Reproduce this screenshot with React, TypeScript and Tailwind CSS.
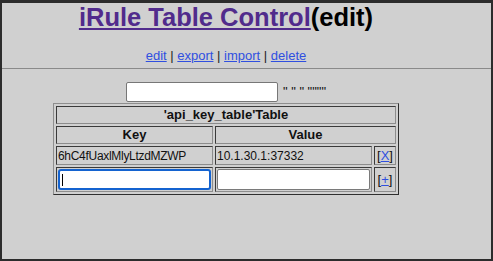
import React from "react";

const cell =
  "border border-t-[#3a3a3a] border-l-[#3a3a3a] border-r-[#8c8c8c] border-b-[#8c8c8c] p-px";

export default function App() {
  return (
    <div className="w-[493px] h-[261px] overflow-hidden bg-[#d0d0d0] border-2 border-t-[3px] border-[#2c2c2c] font-['Liberation_Sans',Arial,sans-serif] text-[#111]">
      <div className="w-[448px] flex flex-col items-center">
        <h1 className="text-[25.5px] leading-[29px] font-bold whitespace-nowrap">
          <a href="#" className="text-[#512b8c] underline">
            iRule Table Control
          </a>
          <span className="text-black">(edit)</span>
        </h1>
        <div className="mt-[16px] text-[13px] leading-4 text-[#222]">
          <a href="#" className="text-[#2f4fe0] underline">edit</a> |{" "}
          <a href="#" className="text-[#2f4fe0] underline">export</a> |{" "}
          <a href="#" className="text-[#2f4fe0] underline">import</a> |{" "}
          <a href="#" className="text-[#2f4fe0] underline">delete</a>
        </div>
      </div>
      <div className="mt-[4px] h-px bg-[#8a8a8a]" />
      <div className="w-[448px] flex flex-col items-center mt-[13px]">
        <div className="flex items-center h-5">
          <input
            type="text"
            className="w-[152px] h-5 bg-white border border-[#777] rounded-[2px] outline-none"
          />
          <span className="ml-[5px] text-[13px] leading-4">" " " """"</span>
        </div>
        <table className="mt-px w-[346px] border-separate border-spacing-[2px] border border-t-[#8e8e8e] border-l-[#8e8e8e] border-r-[#2e2e2e] border-b-[#2e2e2e] table-fixed">
          <colgroup>
            <col className="w-[157px]" />
            <col className="w-[157px]" />
            <col className="w-[22px]" />
          </colgroup>
          <tbody>
            <tr>
              <td colSpan={3} className={`${cell} h-[18px] text-center text-[13px] font-bold leading-[14px]`}>
                'api_key_table'Table
              </td>
            </tr>
            <tr>
              <td className={`${cell} h-[17px] text-center text-[13px] font-bold leading-[14px]`}>
                Key
              </td>
              <td colSpan={2} className={`${cell} h-[17px] text-center text-[13px] font-bold leading-[14px]`}>
                Value
              </td>
            </tr>
            <tr>
              <td className={`${cell} h-[19px] text-[12px] leading-[14px] tracking-[-0.3px] whitespace-nowrap`}>
                6hC4fUaxlMlyLtzdMZWP
              </td>
              <td className={`${cell} h-[19px] text-[12px] leading-[14px]`}>10.1.30.1:37332</td>
              <td className={`${cell} h-[19px] text-center text-[13px] leading-[14px] px-0`}>
                [<a href="#" className="text-[#2f4fe0] underline">X</a>]
              </td>
            </tr>
            <tr>
              <td className={`${cell} h-6 align-middle`}>
                <div className="relative w-[153px] h-[21px] bg-white border-2 border-[#1463d0] rounded-[3px]">
                  <span className="absolute left-[2px] top-[3px] w-px h-[12px] bg-black" />
                </div>
              </td>
              <td className={`${cell} h-6 align-middle`}>
                <input
                  type="text"
                  className="block w-[153px] h-[21px] bg-white border border-[#7a7a7a] rounded-[2px] outline-none"
                />
              </td>
              <td className={`${cell} h-6 text-center text-[13px] leading-[14px] align-middle px-0`}>
                [<a href="#" className="text-[#2f4fe0] underline">+</a>]
              </td>
            </tr>
          </tbody>
        </table>
      </div>
    </div>
  );
}
